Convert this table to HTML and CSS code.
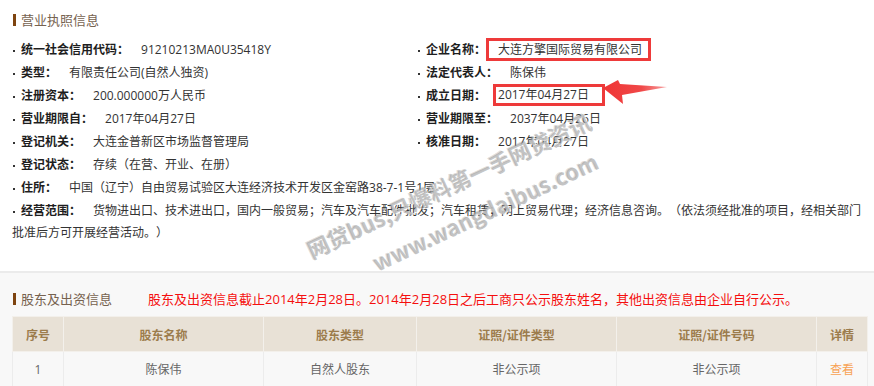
FILE: index.html
```html
<!DOCTYPE html>
<html lang="zh-CN">
<head>
<meta charset="utf-8">
<title>营业执照信息</title>
<link rel="stylesheet" href="styles.css">
</head>
<body>
<div class="page">
  <section class="license">
    <h2 class="sec-title">营业执照信息</h2>
    <div class="grid">
      <div class="item"><span class="lbl">统一社会信用代码：</span><span class="val">91210213MA0U35418Y</span></div>
      <div class="item"><span class="lbl">企业名称：</span><span class="val box-name">大连方擎国际贸易有限公司</span></div>
      <div class="item"><span class="lbl">类型：</span><span class="val">有限责任公司(自然人独资)</span></div>
      <div class="item"><span class="lbl">法定代表人：</span><span class="val">陈保伟</span></div>
      <div class="item"><span class="lbl">注册资本：</span><span class="val">200.000000万人民币</span></div>
      <div class="item"><span class="lbl">成立日期：</span><span class="val box-date">2017年04月27日</span></div>
      <div class="item"><span class="lbl">营业期限自：</span><span class="val">2017年04月27日</span></div>
      <div class="item"><span class="lbl">营业期限至：</span><span class="val">2037年04月26日</span></div>
      <div class="item"><span class="lbl">登记机关：</span><span class="val">大连金普新区市场监督管理局</span></div>
      <div class="item"><span class="lbl">核准日期：</span><span class="val">2017年04月27日</span></div>
      <div class="item"><span class="lbl">登记状态：</span><span class="val">存续（在营、开业、在册）</span></div>
      <div class="item"></div>
    </div>
    <div class="item"><span class="lbl">住所：</span><span class="val">中国（辽宁）自由贸易试验区大连经济技术开发区金窑路38-7-1号1层</span></div>
    <p class="item scope"><span class="lbl">经营范围：</span><span class="val">货物进出口、技术进出口，国内一般贸易；汽车及汽车配件批发；汽车租赁；网上贸易代理；经济信息咨询。（依法须经批准的项目，经相关部门</span><br><span class="cont">批准后方可开展经营活动。）</span></p>
  </section>

  <section class="holders">
    <div class="holders-head">
      <h2 class="sec-title">股东及出资信息</h2>
      <span class="notice">股东及出资信息截止2014年2月28日。2014年2月28日之后工商只公示股东姓名，其他出资信息由企业自行公示。</span>
    </div>
    <table class="tbl">
      <colgroup>
        <col class="c-no"><col class="c-name"><col class="c-type"><col class="c-wide"><col class="c-wide"><col class="c-no">
      </colgroup>
      <thead>
        <tr><th>序号</th><th>股东名称</th><th>股东类型</th><th>证照/证件类型</th><th>证照/证件号码</th><th>详情</th></tr>
      </thead>
      <tbody>
        <tr><td>1</td><td>陈保伟</td><td>自然人股东</td><td>非公示项</td><td>非公示项</td><td class="link">查看</td></tr>
      </tbody>
    </table>
  </section>

  <svg class="arrow" width="70" height="32" viewBox="0 0 70 32" aria-hidden="true">
    <defs>
      <linearGradient id="ag" x1="0" y1="0" x2="1" y2="0">
        <stop offset="0" stop-color="#ef3535"/>
        <stop offset="0.6" stop-color="#f04848"/>
        <stop offset="1" stop-color="#f7a0a0"/>
      </linearGradient>
    </defs>
    <polygon points="3,12 18,4 20,8 67,11 22,19 23,28" fill="url(#ag)"/>
  </svg>

  <div class="watermark" aria-hidden="true">
    <div class="wm1">网贷bus,只爆料第一手网贷资讯</div>
    <div class="wm2">www.wangdaibus.com</div>
  </div>
</div>
</body>
</html>
```

FILE: styles.css
```css
* { box-sizing: border-box; }

html, body {
  margin: 0;
  padding: 0;
  background: #fff;
}

body {
  font-family: "Open Sans", "Noto Sans CJK SC", sans-serif;
  font-size: 12px;
  color: #333;
  text-spacing-trim: space-all;
}

.page {
  position: relative;
  width: 874px;
  height: 386px;
  overflow: hidden;
}

.license {
  padding: 9px 12px 27px 12px;
}

.sec-title {
  margin: 0;
  font-size: 13px;
  font-weight: normal;
  line-height: 22px;
  color: #76624f;
  display: flex;
  align-items: center;
}

.sec-title::before {
  content: "";
  width: 3px;
  height: 12px;
  background: #7e4410;
  margin: 0 5px 0 1px;
}

.license .sec-title {
  margin-bottom: 6px;
}

.grid {
  display: grid;
  grid-template-columns: 405px 1fr;
}

.item {
  margin: 0;
  height: 23px;
  line-height: 23px;
  white-space: nowrap;
}

.item::before {
  content: "";
  display: inline-block;
  width: 2px;
  height: 2px;
  background: #333;
  margin: 0 6px 0 1px;
  vertical-align: middle;
}

.grid .item:empty::before { display: none; }

.lbl {
  font-weight: bold;
  color: #1e1e1e;
  font-family: "Noto Sans CJK SC", sans-serif;
}

.val {
  margin-left: 12px;
}

.scope {
  height: auto;
  line-height: 22px;
  padding-top: 1px;
}

.box-name {
  display: inline-block;
  margin-left: 0;
  border: 3px solid #ee3a3a;
  padding: 0 6px 0 9px;
  line-height: 17px;
  vertical-align: middle;
  position: relative;
  top: -1px;
}

.box-date {
  display: inline-block;
  margin-left: 7px;
  border: 3px solid #ee3a3a;
  padding: 0 13px 0 2px;
  line-height: 16px;
  vertical-align: middle;
  position: relative;
  top: -2px;
}

.holders {
  border-top: 2px solid #ebebeb;
  background: #f8f8f8;
  padding: 15px 7px 0 12px;
  height: 115px;
}

.holders-head {
  display: flex;
  align-items: center;
  margin-bottom: 6px;
}

.notice {
  margin-left: 36px;
  font-size: 13px;
  line-height: 22px;
  color: #f50f0f;
}

.tbl {
  width: 855px;
  table-layout: fixed;
  border-collapse: collapse;
}

.c-no { width: 51px; }
.c-name { width: 200px; }
.c-type { width: 153px; }
.c-wide { width: 200px; }

.tbl th,
.tbl td {
  border: 1px solid #ececec;
  text-align: center;
  padding: 0;
}

.tbl th {
  height: 35px;
  background: #e8e1d6;
  color: #9c7c4c;
  font-weight: bold;
  font-size: 12px;
  font-family: "Noto Sans CJK SC", sans-serif;
  border-color: #f3f0eb;
}

.tbl td {
  height: 35px;
  background: #f8f8f8;
  color: #666;
}

.tbl td.link {
  color: #f7a254;
}

.arrow {
  position: absolute;
  left: 600px;
  top: 76px;
}

.watermark {
  position: absolute;
  left: 277px;
  top: 164px;
  width: 360px;
  transform: rotate(-25deg);
  font-family: "Noto Sans CJK SC", sans-serif;
  font-weight: bold;
  font-size: 22px;
  line-height: 39px;
  text-align: center;
  color: rgba(150, 150, 150, 0.55);
  text-shadow: 1px 1px 0 rgba(255, 255, 255, 0.8), -1px -1px 0 rgba(120, 120, 120, 0.25);
  white-space: nowrap;
  pointer-events: none;
}

.wm2 {
  padding-left: 44px;
}
```
